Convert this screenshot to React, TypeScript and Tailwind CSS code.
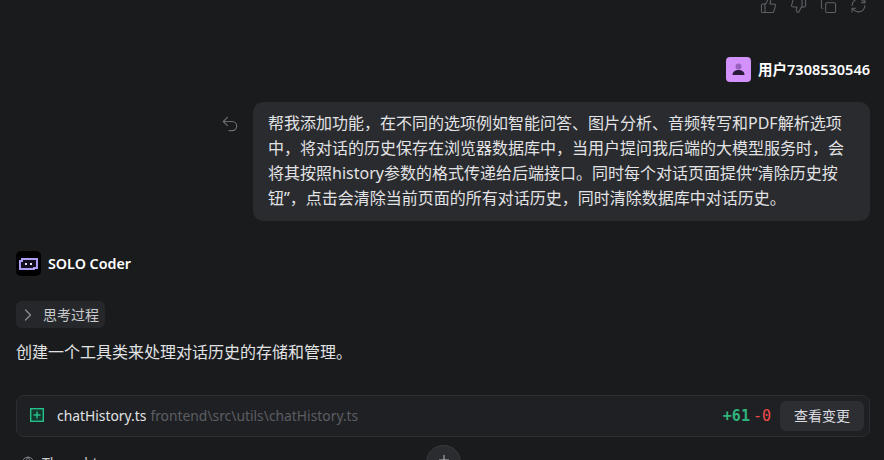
import React from 'react';
import { ThumbsUp, ThumbsDown, Copy, RefreshCw, Undo2, ChevronRight, Plus, Globe } from 'lucide-react';

const fontStack = "font-['Noto_Sans','Noto_Sans_CJK_SC',sans-serif]";

const App: React.FC = () => {
    return (
        <div className={`relative h-[460px] w-[884px] overflow-hidden bg-[#1a1b1d] ${fontStack}`}>
            {/* Message actions, cut off by the top edge */}
            <div className="-mt-1 flex h-[18px] items-center justify-end gap-[13px] pr-[17px] text-[#5e6268]">
                <ThumbsUp size={17} strokeWidth={1.5} />
                <ThumbsDown size={17} strokeWidth={1.5} />
                <Copy size={17} strokeWidth={1.5} />
                <RefreshCw size={17} strokeWidth={1.5} />
            </div>

            {/* User message */}
            <div className="mt-[43px] flex items-center justify-end gap-[7px] pr-[14px]">
                <div className="flex h-[25px] w-[25px] items-center justify-center rounded-[4px] bg-[#d291fb]">
                    <svg width="15" height="15" viewBox="0 0 15 15">
                        <circle cx="7.5" cy="4.5" r="3" fill="#9a62c0" />
                        <path d="M1.5 13c0-3.2 2.6-5 6-5s6 1.8 6 5z" fill="#2b1a3a" />
                    </svg>
                </div>
                <span className="text-[14.5px] leading-[25px] font-semibold text-white">用户7308530546</span>
            </div>

            <div className="mt-[20px] flex items-start justify-end pr-[14px]">
                <Undo2 size={20} strokeWidth={1.4} className="mt-[12px] mr-[13px] text-[#6a6e73]" />
                <div className="w-[617px] rounded-[10px] bg-[#2a2b2f] pt-[9px] pb-[10px] pl-[15px] pr-[15px] text-base leading-[25px] text-[#e2e3e5]">
                    帮我添加功能，在不同的选项例如智能问答、图片分析、音频转写和PDF解析选项中，将对话的历史保存在浏览器数据库中，当用户提问我后端的大模型服务时，会将其按照history参数的格式传递给后端接口。同时每个对话页面提供“清除历史按钮”，点击会清除当前页面的所有对话历史，同时清除数据库中对话历史。
                </div>
            </div>

            {/* Agent reply */}
            <div className="mt-[30px] flex items-center gap-[7px] pl-4">
                <div className="flex h-[25px] w-[25px] items-center justify-center rounded-[5px] bg-black">
                    <svg width="19" height="12" viewBox="0 0 19 12" fill="none">
                        <path d="M3 1H18V10H15V11H1V3H3Z" stroke="#b09cf0" strokeWidth="2" fill="#120f1e" />
                        <rect x="6" y="5" width="2" height="2" fill="#e6def8" />
                        <rect x="11" y="5" width="2" height="2" fill="#e6def8" />
                    </svg>
                </div>
                <span className="text-[14.3px] leading-[25px] font-semibold text-white">SOLO Coder</span>
            </div>

            <div className="mt-[25px] ml-4 flex h-[27px] w-[89px] items-center gap-[5px] rounded-md bg-[#26272a] pl-[2px] text-sm text-[#c9cbce]">
                <ChevronRight size={20} strokeWidth={1.5} className="text-[#8a8d92]" />
                <span>思考过程</span>
            </div>

            <p className="mt-[12px] pl-4 text-base leading-[25px] text-[#e2e3e5]">创建一个工具类来处理对话历史的存储和管理。</p>

            {/* Changed file card */}
            <div className="mt-[30px] ml-4 mr-[14px] flex h-[42px] items-center rounded-lg border border-[#2d2e32] bg-[#1f2024] pl-[13px] pr-[5px]">
                <svg width="14" height="14" viewBox="0 0 14 14" fill="none" className="mr-[13px] -mt-[2px] text-[#25c08a]" stroke="currentColor" strokeWidth="1.4">
                    <rect x="0.7" y="0.7" width="12.6" height="12.6" fill="#14362c" />
                    <path d="M7 3.5v7M3.5 7h7" />
                </svg>
                <span className="text-[13.85px] text-[#e2e3e5]">chatHistory.ts</span>
                <span className="ml-[4px] text-[13.85px] text-[#5b5e63]">frontend\src\utils\chatHistory.ts</span>
                <span className="ml-auto font-['DejaVu_Sans_Mono',monospace] text-[15px] font-semibold text-[#2fb37c]">+61</span>
                <span className="ml-[3px] font-['DejaVu_Sans_Mono',monospace] text-[15px] text-[#f04b4b]">-0</span>
                <div className="ml-[9px] flex h-[30px] w-[84px] items-center justify-center rounded-md bg-[#2d2e32] text-sm text-[#dcdde0]">查看变更</div>
            </div>

            {/* Next row, cut off by the bottom edge */}
            <div className="mt-[16px] flex items-center gap-[7px] pl-[21px] text-sm text-[#c9cbce]">
                <Globe size={14} strokeWidth={1.5} className="text-[#8a8d92]" />
                <span>Thought</span>
            </div>

            {/* Floating scroll button */}
            <div className="absolute left-[426px] top-[445px] flex h-[35px] w-[35px] justify-center rounded-full border border-[#3a3b3f] bg-[#2b2c30] pt-[6px] text-[#b8babd]">
                <Plus size={16} strokeWidth={1.5} />
            </div>
        </div>
    );
};

export default App;
